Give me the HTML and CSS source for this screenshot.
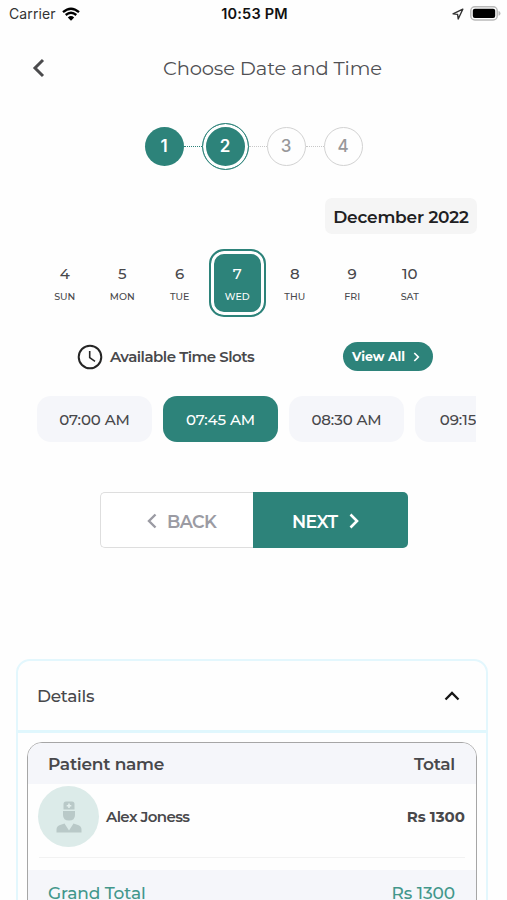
FILE: index.html
```html
<!DOCTYPE html>
<html lang="en">

<head>
     <meta charset="UTF-8">
     <meta name="viewport" content="width=device-width, initial-scale=1.0">
     <title>Choose Date and Time</title>
     <link rel="stylesheet" href="styles.css">
</head>

<body>
     <div class="status_bar">
          <div class="status_left">
               <span class="carrier">Carrier</span>
               <svg class="wifi" width="18" height="14" viewBox="0 0 18 14">
                    <path d="M1 5.2Q9-1.8 17 5.2M3.7 8Q9 3.5 14.3 8" fill="none" stroke="#000" stroke-width="2.3" />
                    <path d="M9 13.8L5.8 10.4Q9 7.7 12.2 10.4Z" />
               </svg>
          </div>
          <span class="clock">10:53 PM</span>
          <div class="status_right">
               <svg width="12" height="12" viewBox="0 0 12 12">
                    <path d="M10.8 1.2L1 5.8L5.6 6.4L6.2 11Z" fill="none" stroke="#333" stroke-width="1.4" stroke-linejoin="round" />
               </svg>
               <svg width="31" height="15" viewBox="0 0 31 15">
                    <rect x=".8" y=".8" width="26.4" height="13.2" rx="4" fill="#fff" stroke="#b9b9b9" stroke-width="1.5" />
                    <rect x="2.8" y="2.8" width="22.4" height="9.2" rx="2" />
                    <path d="M28.5 5Q30.5 5.5 30.5 7.4T28.5 9.8Z" fill="#b9b9b9" />
               </svg>
          </div>
     </div>

     <div class="header">
          <svg class="header_back" width="14" height="20" viewBox="0 0 14 20">
               <path d="M11 2L3 10L11 18" fill="none" stroke="#4b4b4d" stroke-width="3" />
          </svg>
          <h1 class="header_title">Choose Date and Time</h1>
     </div>

     <div class="steps">
          <span class="step step_done">1</span>
          <span class="step_line step_line_done"></span>
          <span class="step step_done step_active">2</span>
          <span class="step_line"></span>
          <span class="step">3</span>
          <span class="step_line"></span>
          <span class="step">4</span>
     </div>

     <div class="month_row">
          <div class="month"><span>December 2022</span></div>
     </div>

     <div class="days">
          <div class="day"><span class="day_num">4</span><span class="day_name">SUN</span></div>
          <div class="day"><span class="day_num">5</span><span class="day_name">MON</span></div>
          <div class="day"><span class="day_num">6</span><span class="day_name">TUE</span></div>
          <div class="day day_active"><span class="day_num">7</span><span class="day_name">WED</span></div>
          <div class="day"><span class="day_num">8</span><span class="day_name">THU</span></div>
          <div class="day"><span class="day_num">9</span><span class="day_name">FRI</span></div>
          <div class="day"><span class="day_num">10</span><span class="day_name">SAT</span></div>
     </div>

     <div class="slots_head">
          <svg width="26" height="26" viewBox="0 0 26 26" fill="none" stroke="#252525">
               <circle cx="13" cy="13" r="11.3" stroke-width="2" />
               <path d="M12.7 7V13.7L18 17.3" stroke-width="1.6" />
          </svg>
          <span class="slots_title">Available Time Slots</span>
          <a class="view_all">
               <span>View All</span>
               <svg width="7" height="10" viewBox="0 0 7 10">
                    <path d="M1.3 1L5.3 5L1.3 9" fill="none" stroke="#fff" stroke-width="1.7" />
               </svg>
          </a>
     </div>

     <div class="slots">
          <span class="slot">07:00 AM</span>
          <span class="slot slot_active">07:45 AM</span>
          <span class="slot">08:30 AM</span>
          <span class="slot">09:15 AM</span>
     </div>

     <div class="btn_box">
          <button class="btn btn_back">
               <svg width="10" height="16" viewBox="0 0 10 16">
                    <path d="M8.5 1.5L2 8L8.5 14.5" fill="none" stroke="#9b9ba3" stroke-width="2.4" />
               </svg>
               <span>BACK</span>
          </button>
          <button class="btn btn_next">
               <span>NEXT</span>
               <svg width="10" height="16" viewBox="0 0 10 16">
                    <path d="M1.5 1.5L8 8L1.5 14.5" fill="none" stroke="#fff" stroke-width="2.6" />
               </svg>
          </button>
     </div>

     <div class="details">
          <div class="details_head">
               <span class="details_title">Details</span>
               <svg width="16" height="10" viewBox="0 0 16 10">
                    <path d="M1.5 8.5L8 2L14.5 8.5" fill="none" stroke="#161616" stroke-width="2.3" />
               </svg>
          </div>
          <div class="bill">
               <div class="bill_head">
                    <span class="bill_name">Patient name</span>
                    <span class="bill_total">Total</span>
               </div>
               <div class="patient">
                    <div class="avatar">
                         <svg width="26" height="32" viewBox="0 0 26 32" fill="#b9c9c8">
                              <path d="M7.5 3Q7.5 .5 10 .5H16Q18.5 .5 18.5 3V8.5H7.5Z" />
                              <path d="M7 10H19V14Q19 19.5 13 19.5T7 14Z" />
                              <path d="M.5 31.5V28.5Q.5 25 4 24L8.5 22.6L13 29.5L17.5 22.6L22 24Q25.5 25 25.5 28.5V31.5Z" />
                              <path d="M12.2 2.5H13.8V4H15.3V5.6H13.8V7.1H12.2V5.6H10.7V4H12.2Z" fill="#e3efed" />
                         </svg>
                    </div>
                    <span class="patient_name">Alex Joness</span>
                    <span class="patient_price">Rs 1300</span>
               </div>
               <div class="grand">
                    <span class="grand_name">Grand Total</span>
                    <span class="grand_price">Rs 1300</span>
               </div>
          </div>
     </div>
</body>

</html>
```
FILE: styles.css
```css
* {
     box-sizing: border-box;
}

body {
     margin: 0;
     height: 900px;
     overflow: hidden;
     background: #fefefe;
     color: #48484b;
     font-family: Montserrat, Inter, sans-serif;
}

svg {
     display: block;
     flex: none;
}

span {
     white-space: nowrap;
}

.status_bar {
     display: grid;
     grid-template-columns: 1fr auto 1fr;
     align-items: center;
     height: 27px;
     padding: 0 6px 0 9px;
     color: #111;
     font-family: Inter, sans-serif;
}

.status_left,
.status_right {
     display: flex;
     align-items: center;
     gap: 6px;
}

.status_right {
     justify-content: flex-end;
}

.carrier {
     font-size: 14px;
     letter-spacing: 0.1px;
     color: #333;
}

.clock {
     margin-right: 1px;
     font-size: 14.5px;
     font-weight: 600;
     letter-spacing: 0.2px;
}

.header {
     display: flex;
     align-items: center;
     height: 81px;
     padding-left: 32px;
}

.header_title {
     margin: 0 0 0 117px;
     font-size: 19.5px;
     font-weight: 400;
     letter-spacing: -0.15px;
     color: #505054;
}

.steps {
     display: flex;
     align-items: center;
     height: 48px;
     margin-top: 14px;
     padding-left: 144.5px;
}

.step {
     display: flex;
     align-items: center;
     justify-content: center;
     width: 39px;
     height: 39px;
     border: 1.5px solid #d2d2d2;
     border-radius: 50%;
     font-family: Inter, sans-serif;
     font-size: 17px;
     font-weight: 500;
     color: #98989a;
}

.step_done {
     border: 0;
     background: #2d837a;
     color: #fff;
     font-weight: 600;
}

.step_active {
     width: 47px;
     height: 47px;
     border: 1.5px solid #2d837a;
     background: #2d837a;
     box-shadow: inset 0 0 0 3px #fff;
}

.step_line {
     width: 18px;
     border-top: 1px dotted #c8c8c8;
}

.step_line_done {
     border-color: #2d837a;
}

.month_row {
     display: flex;
     justify-content: flex-end;
     margin-top: 28px;
     padding-right: 30px;
}

.month {
     width: 152px;
     height: 36px;
     border-radius: 7px;
     background: #f5f5f5;
     color: #202022;
     font-size: 17px;
     font-weight: 600;
     line-height: 38px;
     letter-spacing: -0.2px;
     text-align: center;
}

.days {
     display: grid;
     grid-template-columns: repeat(7, 57.5px);
     height: 68px;
     margin: 15px 0 0 36px;
}

.day {
     display: flex;
     flex-direction: column;
     align-items: center;
     padding-top: 15px;
}

.day_num {
     font-size: 15px;
     font-weight: 500;
     line-height: 20px;
}

.day_name {
     margin-top: 6px;
     font-size: 9.5px;
     font-weight: 500;
     line-height: 14px;
}

.day_active {
     padding-top: 13px;
     border: 2px solid #2d837a;
     border-radius: 15px;
     background: #2d837a;
     box-shadow: inset 0 0 0 3px #fff;
     color: #fff;
}

.slots_head {
     display: flex;
     align-items: center;
     height: 29px;
     margin-top: 25px;
     padding-left: 77px;
}

.slots_title {
     width: 145px;
     margin-left: 7px;
     font-size: 15px;
     font-weight: 600;
     letter-spacing: -0.5px;
}

.view_all {
     display: flex;
     align-items: center;
     gap: 8px;
     width: 90px;
     height: 29px;
     margin-left: 88px;
     padding-left: 9px;
     border-radius: 15px;
     background: #2d837a;
     color: #fff;
     font-size: 12.5px;
     font-weight: 700;
}

.slots {
     display: flex;
     gap: 11px;
     width: 439px;
     margin: 25px 0 0 37px;
     overflow: hidden;
}

.slot {
     flex: none;
     width: 115px;
     height: 46px;
     border-radius: 14px;
     background: #f5f6fa;
     font-size: 15px;
     font-weight: 500;
     line-height: 47px;
     letter-spacing: -0.1px;
     text-align: center;
}

.slot_active {
     background: #2d837a;
     color: #fff;
}

.btn_box {
     display: flex;
     width: 308px;
     height: 56px;
     margin: 50px 0 0 100px;
}

.btn {
     display: flex;
     align-items: center;
     padding: 2px 0 0;
     font-family: inherit;
     font-size: 17.5px;
     font-weight: 600;
     letter-spacing: -0.6px;
}

.btn_back {
     gap: 10px;
     width: 153px;
     padding-left: 46px;
     border: 1px solid #dedede;
     border-right: 0;
     border-radius: 5px 0 0 5px;
     background: #fff;
     color: #9b9ba3;
}

.btn_next {
     gap: 11px;
     width: 155px;
     padding-left: 39px;
     border: 0;
     border-radius: 0 5px 5px 0;
     background: #2d837a;
     color: #fff;
}

.details {
     width: 472px;
     height: 280px;
     margin: 111px 0 0 16px;
     border: 2px solid #e3f7fd;
     border-radius: 14px;
}

.details_head {
     display: flex;
     align-items: center;
     justify-content: space-between;
     height: 72px;
     padding: 0 26px 0 19px;
     border-bottom: 3px solid #e0f7fd;
}

.details_title {
     font-size: 17px;
     font-weight: 500;
     letter-spacing: -0.3px;
}

.bill {
     width: 450px;
     height: 200px;
     margin: 9px 0 0 9px;
     overflow: hidden;
     border: 1.5px solid #a6a6a6;
     border-radius: 15px;
}

.bill_head,
.grand {
     display: flex;
     align-items: center;
     justify-content: space-between;
     height: 41px;
     padding: 1px 21px 0 20px;
     background: #f5f6fa;
     font-size: 17px;
     font-weight: 600;
     letter-spacing: -0.25px;
}

.patient {
     display: flex;
     align-items: center;
     height: 74px;
     margin: 0 11px;
     padding-bottom: 8px;
     border-bottom: 1px solid #f2f2f2;
     font-size: 15px;
}

.avatar {
     display: flex;
     align-items: center;
     justify-content: center;
     width: 61px;
     height: 61px;
     margin-left: -1px;
     border-radius: 50%;
     background: #dcebe9;
}

.patient_name {
     margin-left: 7px;
     font-weight: 600;
     letter-spacing: -0.6px;
}

.patient_price {
     margin-left: auto;
     font-weight: 700;
}

.grand {
     height: 60px;
     margin-top: 12px;
     padding-bottom: 15px;
     color: #42978b;
     font-weight: 500;
     letter-spacing: -0.1px;
}
```
